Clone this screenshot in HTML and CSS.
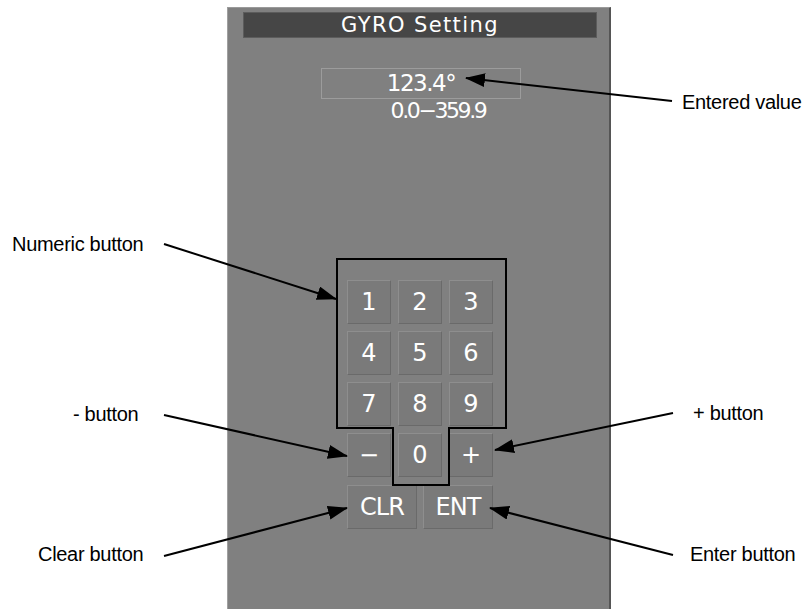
FILE: index.html
```html
<!DOCTYPE html>
<html lang="en">
<head>
  <meta charset="UTF-8" />
  <title>GYRO Setting</title>
  <link rel="stylesheet" href="styles.css">
</head>
<body>

  <div class="stage">
    <div class="panel">
      <div class="title">GYRO Setting</div>

      <div class="value-box">123.4°</div>
      <div class="range">0.0−359.9</div>

      <div class="keypad">
        <button class="key">1</button>
        <button class="key">2</button>
        <button class="key">3</button>
        <button class="key">4</button>
        <button class="key">5</button>
        <button class="key">6</button>
        <button class="key">7</button>
        <button class="key">8</button>
        <button class="key">9</button>
        <button class="key">−</button>
        <button class="key">0</button>
        <button class="key">+</button>
      </div>
      <div class="actions">
        <button class="key wide">CLR</button>
        <button class="key wide">ENT</button>
      </div>
    </div>

    <!-- callout lines and the keypad outline -->
    <svg class="overlay" width="806" height="609" viewBox="0 0 806 609">
      <defs>
        <marker id="head" markerWidth="20" markerHeight="14" refX="19" refY="7" orient="auto" markerUnits="userSpaceOnUse">
          <path d="M0 0 L20 7 L0 14 Z" fill="#000" />
        </marker>
      </defs>
      <path d="M337 259 H506 V428 H449 V485 H393 V428 H337 Z" fill="none" stroke="#000" stroke-width="2" />
      <line x1="672" y1="101" x2="466" y2="78" stroke="#000" stroke-width="2" marker-end="url(#head)" />
      <line x1="164" y1="244" x2="336" y2="299" stroke="#000" stroke-width="2" marker-end="url(#head)" />
      <line x1="164" y1="415" x2="347" y2="456" stroke="#000" stroke-width="2" marker-end="url(#head)" />
      <line x1="164" y1="556" x2="347" y2="508" stroke="#000" stroke-width="2" marker-end="url(#head)" />
      <line x1="673" y1="413" x2="495" y2="450" stroke="#000" stroke-width="2" marker-end="url(#head)" />
      <line x1="673" y1="555" x2="490" y2="508" stroke="#000" stroke-width="2" marker-end="url(#head)" />
    </svg>

    <div class="callout c-entered">Entered value</div>
    <div class="callout c-numeric">Numeric button</div>
    <div class="callout c-minus">- button</div>
    <div class="callout c-plus">+ button</div>
    <div class="callout c-clear">Clear button</div>
    <div class="callout c-enter">Enter button</div>
  </div>

</body>
</html>
```

FILE: styles.css
```css
body {
  margin: 0;
  background: #fff;
  font-family: "DejaVu Sans", sans-serif;
}
.stage {
  position: relative;
  width: 806px;
  height: 609px;
  overflow: hidden;
}
.panel {
  margin-left: 227px;
  margin-top: 7px;
  width: 384px;
  height: 602px;
  box-sizing: border-box;
  background: #808080;
  border-left: 1px solid #a0a0a0;
  border-top: 1px solid #9a9a9a;
  border-right: 2px solid #555;
  padding: 4px 0 0 0;
  display: flex;
  flex-direction: column;
  align-items: flex-start;
}
.title {
  margin-left: 15px;
  width: 354px;
  height: 26px;
  box-sizing: border-box;
  background: #464646;
  border: 1px solid #5c5c5c;
  color: #fff;
  font-size: 21px;
  line-height: 24px;
  text-align: center;
  letter-spacing: 1.4px;
}
.value-box {
  margin-top: 30px;
  margin-left: 93px;
  width: 200px;
  height: 31px;
  box-sizing: border-box;
  border: 1px solid #9c9c9c;
  color: #fff;
  font-size: 23px;
  line-height: 29px;
  text-align: center;
  letter-spacing: -1.5px;
}
.range {
  margin-left: 110px;
  width: 200px;
  color: #fff;
  font-size: 22px;
  line-height: 24px;
  text-align: center;
  letter-spacing: -2.4px;
}
.keypad {
  margin-top: 157px;
  margin-left: 119px;
  display: grid;
  grid-template-columns: repeat(3, 44px);
  grid-auto-rows: 44px;
  gap: 7px;
}
.actions {
  margin-top: 8px;
  margin-left: 119px;
  display: flex;
  gap: 6px;
}
.key {
  width: 44px;
  height: 44px;
  padding: 0;
  background: #7a7a7a;
  border: 1px solid;
  border-color: #8e8e8e #6a6a6a #6a6a6a #8e8e8e;
  color: #fff;
  font-family: "DejaVu Sans", sans-serif;
  font-size: 24px;
  text-align: center;
}
.key.wide {
  width: 70px;
  letter-spacing: -1px;
}
.overlay {
  position: absolute;
  left: 0;
  top: 0;
}
.callout {
  position: absolute;
  font-family: "Liberation Sans", Arial, sans-serif;
  font-size: 20px;
  letter-spacing: -0.3px;
  color: #000;
  white-space: nowrap;
}
.c-entered { left: 682px; top: 91px; }
.c-numeric { left: 12px; top: 233px; }
.c-minus { left: 73px; top: 403px; }
.c-plus { left: 693px; top: 402px; }
.c-clear { left: 38px; top: 543px; }
.c-enter { left: 690px; top: 543px; }
```
